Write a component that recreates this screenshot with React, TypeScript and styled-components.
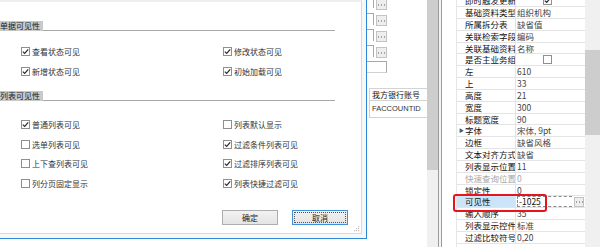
import React from "react";
import styled, { createGlobalStyle } from "styled-components";

const GlobalStyle = createGlobalStyle`
  html, body {
    margin: 0;
    padding: 0;
    background: #fff;
  }
  body {
    width: 600px;
    height: 247px;
    overflow: hidden;
    font-family: "Noto Sans CJK SC", "Liberation Sans", sans-serif;
  }
`;

const ROW_H = 11.84;

type Check = [string, boolean];

const topChecks: Check[] = [
  ["查看状态可见", true],
  ["修改状态可见", true],
  ["新增状态可见", true],
  ["初始加载可见", true],
];

const listChecks: Check[] = [
  ["普通列表可见", true],
  ["列表默认显示", false],
  ["选单列表可见", false],
  ["过滤条件列表可见", true],
  ["上下查列表可见", false],
  ["过滤排序列表可见", true],
  ["列分页固定显示", false],
  ["列表快捷过滤可见", true],
];

type Prop = {
  name: string;
  value?: string;
  check?: boolean;
  expand?: boolean;
  disabled?: boolean;
  selected?: boolean;
};

const props: Prop[] = [
  { name: "即时触发更新", check: true },
  { name: "基础资料类型", value: "组织机构" },
  { name: "所属拆分表", value: "缺省值" },
  { name: "关联检索字段", value: "编码" },
  { name: "关联基础资料", value: "名称" },
  { name: "是否主业务组", check: false },
  { name: "左", value: "610" },
  { name: "上", value: "33" },
  { name: "高度", value: "21" },
  { name: "宽度", value: "300" },
  { name: "标题宽度", value: "90" },
  { name: "字体", value: "宋体, 9pt", expand: true },
  { name: "边框", value: "缺省风格" },
  { name: "文本对齐方式", value: "缺省" },
  { name: "列表显示位置", value: "11" },
  { name: "快速查询位置", value: "0", disabled: true },
  { name: "锁定性", value: "0" },
  { name: "可见性", value: "-1025", selected: true },
  { name: "输入顺序", value: "35" },
  { name: "列表显示控件", value: "标准" },
  { name: "过滤比较符号", value: "0,20" },
];

const Screen = styled.div`
  display: flex;
  width: 600px;
  height: 247px;
  overflow: hidden;
  background: #fff;
`;

/* ---------- dialog ---------- */

const DialogColumn = styled.div`
  flex: none;
  width: 367px;
`;

const DialogFrame = styled.div`
  box-sizing: border-box;
  height: 239px;
  display: flex;
  padding: 0 4px 4px 0;
  background: #f7f7f7;
  border-right: 1px solid #2b88d8;
  border-bottom: 1px solid #2b88d8;
`;

const DialogBody = styled.div`
  position: relative;
  flex: 1;
  display: flex;
  flex-direction: column;
  background: #fff;
  border-top: 2px solid #eeeeee;
  border-right: 1px solid #d9d9d9;
  border-bottom: 1px solid #d9d9d9;
`;

const SectionHeader = styled.div<{ $top: number }>`
  display: flex;
  align-items: flex-end;
  height: 10px;
  margin: ${(p) => p.$top}px 26px 0 0;
`;

const SectionLabel = styled.div`
  width: 43px;
  height: 10px;
  background: #c9c9c9;
  color: #222;
  font-size: 8px;
  line-height: 10px;
  white-space: nowrap;
`;

const SectionRule = styled.div`
  flex: 1;
  border-bottom: 1px solid #a8a8a8;
`;

const CheckGrid = styled.div<{ $top: number }>`
  display: grid;
  grid-template-columns: 202px 1fr;
  grid-auto-rows: 19.5px;
  margin-top: ${(p) => p.$top}px;
  padding-left: 21px;
`;

const CheckItem = styled.label`
  display: flex;
  align-items: center;
  gap: 2px;
  color: #333;
  font-size: 8px;
  white-space: nowrap;
`;

const Box = styled.span`
  flex: none;
  box-sizing: border-box;
  width: 9px;
  height: 9px;
  display: inline-flex;
  align-items: center;
  justify-content: center;
  background: #fff;
  border: 1px solid #8f8f8f;
`;

const ButtonRow = styled.div`
  display: flex;
  gap: 14px;
  margin-top: 16.75px;
  padding-left: 222px;
`;

const DialogButton = styled.button<{ $focused?: boolean }>`
  box-sizing: border-box;
  width: 56px;
  height: 15px;
  padding: 0;
  font-family: inherit;
  font-size: 8px;
  line-height: 13px;
  color: #222;
  background: linear-gradient(#f2f2f2, #e4e4e4);
  border: 1px solid ${(p) => (p.$focused ? "#3c93dc" : "#adadad")};
  outline: ${(p) => (p.$focused ? "1px dotted #555" : "none")};
  outline-offset: -3px;
`;

const Grip = styled.svg`
  position: absolute;
  right: 1px;
  bottom: 1px;
`;

/* ---------- grid behind the dialog ---------- */

const BackPane = styled.div`
  flex: none;
  width: 60px;
  display: flex;
  flex-direction: column;
  font-size: 8px;
`;

const LookupRow = styled.div<{ $first?: boolean }>`
  display: flex;
  align-items: flex-start;
  height: 16px;
  margin-top: ${(p) => (p.$first ? -3 : 0)}px;
`;

const LookupField = styled.div<{ $first?: boolean }>`
  width: 6px;
  height: 11px;
  border-top: ${(p) => (p.$first ? "none" : "1px solid #a9a9a9")};
  border-right: 1px solid #a9a9a9;
`;

const DotButton = styled.div<{ $size?: number }>`
  flex: none;
  box-sizing: border-box;
  width: ${(p) => p.$size ?? 11}px;
  height: ${(p) => p.$size ?? 11}px;
  margin: 2px 0 0 2px;
  display: flex;
  align-items: center;
  justify-content: center;
  background: #eeeeee;
  border: 1px solid #c3c3c3;
`;

const EmptyField = styled.div`
  box-sizing: border-box;
  width: 20px;
  height: 12px;
  border-top: 1px solid #a9a9a9;
  border-right: 1px solid #a9a9a9;
  border-bottom: 1px solid #d0d0d0;
`;

const ColumnHead = styled.div`
  box-sizing: border-box;
  height: 13px;
  margin: 15px 0 0 2px;
  padding-left: 2px;
  border: 1px solid #d3d3d3;
  border-right: none;
  color: #111;
  line-height: 11px;
  white-space: nowrap;
  overflow: hidden;
`;

const ColumnCell = styled.div`
  box-sizing: border-box;
  height: 17px;
  margin-left: 2px;
  padding-left: 2px;
  border-left: 1px solid #d3d3d3;
  border-bottom: 1px solid #d3d3d3;
  color: #333;
  font-family: "Liberation Sans", sans-serif;
  font-size: 7.5px;
  line-height: 16px;
  white-space: nowrap;
  overflow: hidden;
`;

/* ---------- scrollbars, splitter ---------- */

const ScrollTrack = styled.div<{ $w: number }>`
  flex: none;
  width: ${(p) => p.$w}px;
  display: flex;
  flex-direction: column;
  background: #f0f0f0;
`;

const ScrollThumb = styled.div<{ $top: number; $h: number }>`
  margin-top: ${(p) => p.$top}px;
  height: ${(p) => p.$h}px;
  background: #cdcdcd;
`;

const Splitter = styled.div`
  flex: none;
  width: 4px;
  background: #f4f4f4;
  border-left: 1px solid #9c9c9c;
  border-right: 1px solid #9c9c9c;
  box-sizing: border-box;
`;

/* ---------- property grid ---------- */

const PropPanel = styled.div`
  position: relative;
  flex: none;
  width: 143px;
  display: flex;
  background: #fff;
`;

const Gutter = styled.div`
  flex: none;
  width: 14px;
  background: #fff;
`;

const PropList = styled.div`
  flex: 1;
  margin-top: -4.76px;
  border-left: 1px solid #e6e6e6;
`;

const PropRow = styled.div`
  display: grid;
  grid-template-columns: 59px 1fr;
  height: ${ROW_H}px;
  box-sizing: border-box;
  border-bottom: 1px solid #e4e4e4;
  font-size: 8.5px;
  line-height: ${ROW_H - 1}px;
`;

const PropName = styled.div<{ $disabled?: boolean; $selected?: boolean }>`
  position: relative;
  padding-left: 8px;
  overflow: hidden;
  white-space: nowrap;
  border-right: 1px solid #e4e4e4;
  color: ${(p) => (p.$disabled ? "#a8a8a8" : "#111")};
  background: ${(p) => (p.$selected ? "#cce4f7" : "transparent")};
`;

const ExpandMark = styled.span`
  position: absolute;
  left: 2px;
  top: 0;
  font-size: 5px;
  color: #555;
`;

const PropValue = styled.div<{ $disabled?: boolean }>`
  display: flex;
  align-items: center;
  padding-left: 1px;
  overflow: hidden;
  white-space: nowrap;
  color: ${(p) => (p.$disabled ? "#a8a8a8" : "#444")};
`;

const CenteredBox = styled.div`
  flex: 1;
  display: flex;
  justify-content: center;
  padding-right: 7px;
`;

const EditBox = styled.div`
  flex: 1;
  height: 100%;
  box-sizing: border-box;
  padding-left: 1px;
  border: 1px dashed #8a8a8a;
  border-right: none;
  color: #111;
  line-height: ${ROW_H - 3}px;
`;

const Highlight = styled.div`
  position: absolute;
  left: 11px;
  top: 194px;
  width: 94px;
  height: 18px;
  box-sizing: border-box;
  border: 2px solid #e8141c;
  border-radius: 3px;
  pointer-events: none;
`;

const CheckMark = () => (
  <svg width="7" height="7" viewBox="0 0 7 7">
    <path d="M0.8 3.6 L2.7 5.4 L6.2 1.3" fill="none" stroke="#2b2b2b" strokeWidth="1.2" />
  </svg>
);

const Dots = () => (
  <svg width="7" height="2" viewBox="0 0 7 2">
    <g fill="#555">
      <rect x="0" y="0.5" width="1" height="1" />
      <rect x="3" y="0.5" width="1" height="1" />
      <rect x="6" y="0.5" width="1" height="1" />
    </g>
  </svg>
);

const CheckBox = ({ checked }: { checked: boolean }) => <Box>{checked && <CheckMark />}</Box>;

const Checks = ({ items, top }: { items: Check[]; top: number }) => (
  <CheckGrid $top={top}>
    {items.map(([text, on]) => (
      <CheckItem key={text}>
        <CheckBox checked={on} />
        {text}
      </CheckItem>
    ))}
  </CheckGrid>
);

export default function App() {
  return (
    <>
      <GlobalStyle />
      <Screen>
        <DialogColumn>
          <DialogFrame>
            <DialogBody>
              <SectionHeader $top={19}>
                <SectionLabel>单据可见性</SectionLabel>
                <SectionRule />
              </SectionHeader>
              <Checks items={topChecks} top={11} />
              <SectionHeader $top={10}>
                <SectionLabel>列表可见性</SectionLabel>
                <SectionRule />
              </SectionHeader>
              <Checks items={listChecks} top={14} />
              <ButtonRow>
                <DialogButton>确定</DialogButton>
                <DialogButton $focused>取消</DialogButton>
              </ButtonRow>
              <Grip width="6" height="6" viewBox="0 0 6 6">
                <g fill="#c2c2c2">
                  <rect x="4" y="0" width="1.2" height="1.2" />
                  <rect x="2" y="2" width="1.2" height="1.2" />
                  <rect x="4" y="2" width="1.2" height="1.2" />
                  <rect x="0" y="4" width="1.2" height="1.2" />
                  <rect x="2" y="4" width="1.2" height="1.2" />
                  <rect x="4" y="4" width="1.2" height="1.2" />
                </g>
              </Grip>
            </DialogBody>
          </DialogFrame>
        </DialogColumn>

        <BackPane>
          {[0, 1, 2, 3].map((i) => (
            <LookupRow key={i} $first={i === 0}>
              <LookupField $first={i === 0} />
              <DotButton>
                <Dots />
              </DotButton>
            </LookupRow>
          ))}
          <EmptyField />
          <ColumnHead>我方银行账号</ColumnHead>
          <ColumnCell>FACCOUNTID</ColumnCell>
        </BackPane>

        <ScrollTrack $w={11}>
          <ScrollThumb $top={0} $h={170} />
        </ScrollTrack>
        <Splitter />

        <PropPanel>
          <Gutter />
          <PropList>
            {props.map((p) => (
              <PropRow key={p.name}>
                <PropName $disabled={p.disabled} $selected={p.selected}>
                  {p.expand && <ExpandMark>▶</ExpandMark>}
                  {p.name}
                </PropName>
                <PropValue $disabled={p.disabled}>
                  {p.check !== undefined ? (
                    <CenteredBox>
                      <CheckBox checked={p.check} />
                    </CenteredBox>
                  ) : p.selected ? (
                    <>
                      <EditBox>{p.value}</EditBox>
                      <DotButton $size={10} style={{ margin: "0 1px 0 2px" }}>
                        <Dots />
                      </DotButton>
                    </>
                  ) : (
                    p.value
                  )}
                </PropValue>
              </PropRow>
            ))}
          </PropList>
          <Highlight />
        </PropPanel>

        <ScrollTrack $w={15}>
          <ScrollThumb $top={50} $h={85} />
        </ScrollTrack>
      </Screen>
    </>
  );
}
